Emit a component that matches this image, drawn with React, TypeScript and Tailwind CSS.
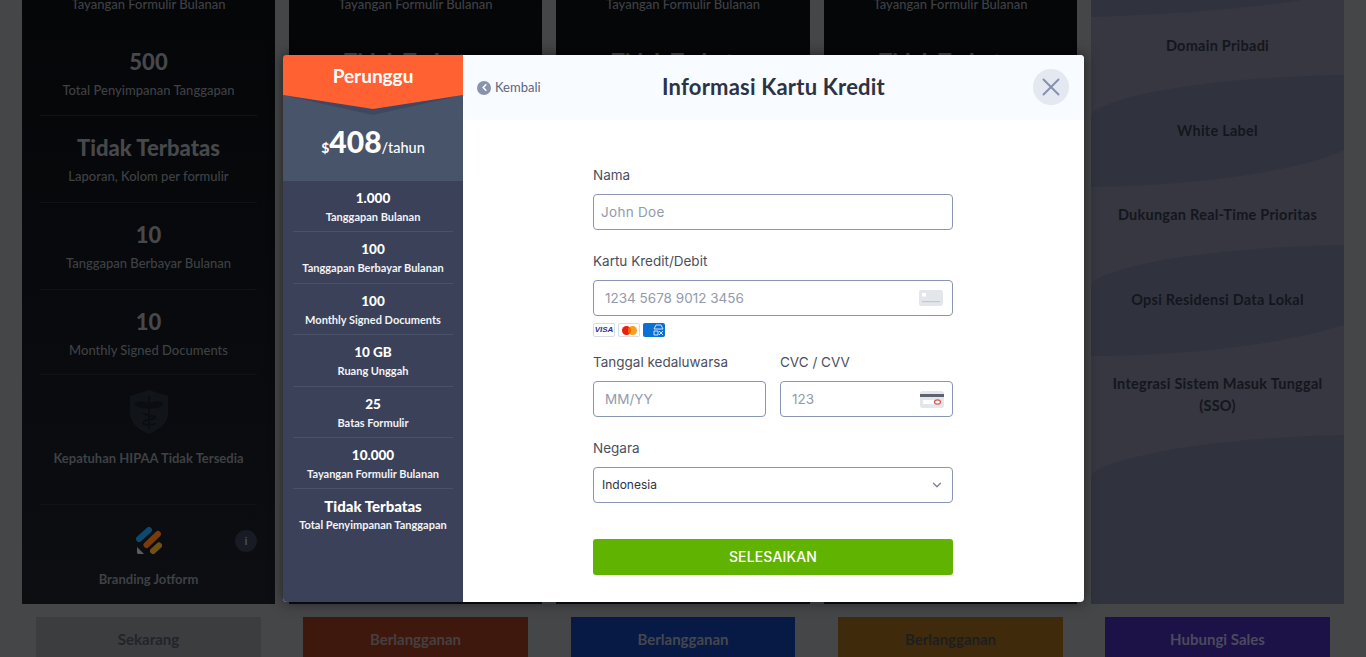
import { ChevronDown, ChevronLeft, X } from "lucide-react";

const HEAD = "font-['Lato','Liberation_Sans',sans-serif]";
const FORM = "font-['Inter','Liberation_Sans',sans-serif]";

const PLAN_ROWS = [
  { value: "1.000", label: "Tanggapan Bulanan" },
  { value: "100", label: "Tanggapan Berbayar Bulanan" },
  { value: "100", label: "Monthly Signed Documents" },
  { value: "10 GB", label: "Ruang Unggah" },
  { value: "25", label: "Batas Formulir" },
  { value: "10.000", label: "Tayangan Formulir Bulanan" },
];

function ShieldIcon() {
  return (
    <svg width="42" height="46" viewBox="0 0 42 46" fill="none">
      <path d="M21 1 L40 7 V24 C40 35 30 41 21 45 C12 41 2 35 2 24 V7 Z" fill="#11151a" />
      <path d="M6 15 C12 11 17 12 21 15 C25 12 30 11 36 15 C31 20 25 20 21 19 C17 20 11 20 6 15 Z" fill="#0b0d11" />
      <path d="M21 7 V40 M15 24 C20 28 26 26 27 28 C28 31 15 30 15 34 C15 37 27 36 27 34" stroke="#0b0d11" strokeWidth="2" />
    </svg>
  );
}

function JotformLogo() {
  return (
    <svg width="26" height="28" viewBox="0 0 26 28" fill="none">
      <path d="M3 12 L13 3" stroke="#0d4a72" strokeWidth="6" strokeLinecap="round" />
      <path d="M10.5 18 L22 7" stroke="#7a3a0a" strokeWidth="6" strokeLinecap="round" />
      <path d="M17 24 L23 18.5" stroke="#6d5214" strokeWidth="6" strokeLinecap="round" />
      <path d="M1 20 L8 27 H2.5 C1.6 27 1 26.4 1 25.5 Z" fill="#5c5c5c" />
    </svg>
  );
}

function FeatureColumn({ width, full }: { width: string; full?: boolean }) {
  const rowClass = "flex flex-col items-center pt-[18px] border-b border-[#101217] mx-[18px]";
  const valueClass = `${HEAD} text-[22px] leading-[28px] font-black text-[#46484b]`;
  const subClass = `${HEAD} text-[13px] leading-5 mt-1 font-medium text-[#3f4145]`;
  return (
    <div className={`${width} h-[604px] shrink-0 overflow-hidden bg-gradient-to-b from-[#050608] to-[#0c0e12] relative`}>
      <div className={`${HEAD} h-[30px] flex items-end justify-center pb-4 text-[13px] leading-5 font-medium text-[#3f4145]`}>
        Tayangan Formulir Bulanan
      </div>
      <div className={`${rowClass} h-[86px]`}>
        <div className={valueClass}>{full ? "500" : "Tidak Terbatas"}</div>
        <div className={subClass}>Total Penyimpanan Tanggapan</div>
      </div>
      <div className={`${rowClass} h-[87px]`}>
        <div className={valueClass}>Tidak Terbatas</div>
        <div className={subClass}>Laporan, Kolom per formulir</div>
      </div>
      <div className={`${rowClass} h-[87px]`}>
        <div className={valueClass}>10</div>
        <div className={subClass}>Tanggapan Berbayar Bulanan</div>
      </div>
      <div className={`${rowClass} h-[85px]`}>
        <div className={valueClass}>10</div>
        <div className={subClass}>Monthly Signed Documents</div>
      </div>
      <div className={`${rowClass} h-[130px] !pt-[14px]`}>
        <ShieldIcon />
        <div className={`${subClass} !mt-[13px] !font-bold`}>Kepatuhan HIPAA Tidak Tersedia</div>
      </div>
      <div className="flex flex-col items-center pt-[22px] relative">
        <JotformLogo />
        <div className={`${HEAD} text-[13px] leading-5 mt-[14px] font-bold text-[#3f4145]`}>Branding Jotform</div>
        <span className="absolute right-[18px] top-[25px] w-[22px] h-[22px] rounded-full bg-[#181b24] flex items-center justify-center text-[11px] font-bold text-[#4a4c52] font-['Liberation_Sans',sans-serif]">
          i
        </span>
      </div>
    </div>
  );
}

function EnterpriseColumn() {
  const rows = ["Domain Pribadi", "White Label", "Dukungan Real-Time Prioritas", "Opsi Residensi Data Lokal"];
  return (
    <div className="w-[253px] h-[604px] shrink-0 overflow-hidden bg-[#363741] relative pt-[3.5px]">
      <svg className="absolute inset-0" width="253" height="604" viewBox="0 0 253 604" fill="#30333e">
        <path d="M0 17 C60 15 150 10 210 0 H0 Z" />
        <path d="M0 187 C80 187 200 175 253 150 V75 C170 76 60 85 10 107 C3 110 0 114 0 120 Z" />
        <path d="M0 356 C90 356 190 345 253 325 V245 C170 246 60 255 10 277 C3 280 0 284 0 290 Z" />
        <path d="M0 604 H253 V435 C170 436 60 447 10 468 C3 471 0 475 0 480 Z" />
      </svg>
      {rows.map((text) => (
        <div key={text} className={`${HEAD} relative h-[84.7px] flex items-center justify-center text-[14.5px] tracking-[0.25px] font-bold text-[#14161d]`}>
          {text}
        </div>
      ))}
      <div className={`${HEAD} relative pt-[30.5px] px-4 text-center text-[14.5px] tracking-[0.25px] leading-[22px] font-bold text-[#14161d]`}>
        Integrasi Sistem Masuk Tunggal (SSO)
      </div>
    </div>
  );
}

function ActionButton({ label, className }: { label: string; className: string }) {
  return (
    <div className={`${HEAD} h-[44px] flex items-center justify-center text-[15px] font-bold ${className}`}>{label}</div>
  );
}

function CardLogos() {
  return (
    <div className="flex gap-[3px] mt-[7px] h-[14px]">
      <span className="w-[22px] h-[14px] rounded-[2px] border border-[#d8dce6] bg-white flex items-center justify-center text-[8px] font-bold italic leading-none text-[#26339a] font-['Liberation_Sans',sans-serif]">
        VISA
      </span>
      <span className="w-[22px] h-[14px] rounded-[2px] border border-[#d8dce6] bg-white flex items-center justify-center">
        <svg width="15" height="9" viewBox="0 0 15 9">
          <circle cx="4.5" cy="4.5" r="4.5" fill="#e8200f" />
          <circle cx="10.5" cy="4.5" r="4.5" fill="#f79e1b" />
          <path d="M7.5 1.1 A4.5 4.5 0 0 1 7.5 7.9 A4.5 4.5 0 0 1 7.5 1.1 Z" fill="#ff5f00" />
        </svg>
      </span>
      <span className="w-[22px] h-[14px] rounded-[2px] bg-[#0b6fd3] flex items-center justify-end pr-[1px]">
        <svg width="11" height="12" viewBox="0 0 11 12" fill="none" stroke="#cfe4f8" strokeWidth="1">
          <path d="M3 1 H8 L10 5 H1 Z M1 7 H5 V11 H1 Z M6 7 L10 11 M10 7 L6 11" />
        </svg>
      </span>
    </div>
  );
}

function CardIcon() {
  return (
    <svg width="24" height="16" viewBox="0 0 24 16">
      <rect width="24" height="16" rx="2.5" fill="#e3e7ec" />
      <rect x="3" y="3" width="4" height="3.5" fill="#ffffff" />
      <rect x="3" y="11" width="18" height="1.2" fill="#c2c8d0" />
    </svg>
  );
}

function CvcIcon() {
  return (
    <svg width="24" height="17" viewBox="0 0 24 17">
      <rect width="24" height="17" rx="2.5" fill="#e3e7ec" />
      <rect y="3" width="24" height="3" fill="#5d6470" />
      <rect x="3" y="9" width="18" height="4" fill="#ffffff" />
      <ellipse cx="17.5" cy="11" rx="3" ry="2.2" fill="#ffffff" stroke="#d9534f" strokeWidth="1.2" />
    </svg>
  );
}

function PlanPanel() {
  return (
    <div className="w-[180px] shrink-0 bg-[#3a4159] flex flex-col">
      <div className="relative h-[126px] bg-[#485469]">
        <svg className="absolute top-0 left-0" width="180" height="62" viewBox="0 0 180 62">
          <path d="M0 40 L90 60 L180 40 V0 H0 Z" fill="#3e4860" />
          <path d="M0 0 H180 V40 L90 54 L0 40 Z" fill="#ff6133" />
        </svg>
        <div className={`${HEAD} relative text-center text-[19px] leading-6 font-bold text-white pt-[9px]`}>Perunggu</div>
        <div className={`${HEAD} relative flex items-baseline justify-center mt-[35px] text-white`}>
          <span className="text-[14px] font-bold">$</span>
          <span className="text-[30px] leading-9 font-black">408</span>
          <span className="text-[14.5px] font-medium">/tahun</span>
        </div>
      </div>
      <div className="px-[10px]">
        {PLAN_ROWS.map((row) => (
          <div key={row.label} className="h-[51.4px] border-b border-[#4a5269] flex flex-col items-center pt-[9px]">
            <div className={`${HEAD} text-[13.5px] leading-[17px] font-black text-white`}>{row.value}</div>
            <div className={`${HEAD} text-[11px] leading-[14px] mt-[3px] font-bold text-[#f2f3f6] whitespace-nowrap`}>{row.label}</div>
          </div>
        ))}
        <div className="flex flex-col items-center pt-[9px]">
          <div className={`${HEAD} text-[15px] leading-[17px] font-black text-white`}>Tidak Terbatas</div>
          <div className={`${HEAD} text-[11px] leading-[14px] mt-[3px] font-bold text-[#f2f3f6] whitespace-nowrap`}>Total Penyimpanan Tanggapan</div>
        </div>
      </div>
    </div>
  );
}

function CardForm() {
  const labelClass = "block text-[13.5px] leading-5 text-[#4a4f5e] mb-[9px]";
  const inputClass =
    "w-full h-[36px] rounded-[4px] border border-[#8a95b3] bg-white text-[13.5px] outline-none placeholder:text-[#929aab]";
  return (
    <form className={`${FORM} w-[360px] ml-[130px] pt-[45px]`}>
      <label className={labelClass}>Nama</label>
      <input className={`${inputClass} pl-[7px] tracking-[0.3px]`} placeholder="John Doe" />

      <label className={`${labelClass} mt-[21px]`}>Kartu Kredit/Debit</label>
      <div className="relative">
        <input className={`${inputClass} pl-[11px]`} placeholder="1234 5678 9012 3456" />
        <span className="absolute right-[10px] top-[10px] flex">
          <CardIcon />
        </span>
      </div>
      <CardLogos />

      <div className="flex gap-[14px] mt-[15px]">
        <div className="flex-1">
          <label className={labelClass}>Tanggal kedaluwarsa</label>
          <input className={`${inputClass} pl-[11px]`} placeholder="MM/YY" />
        </div>
        <div className="flex-1">
          <label className={labelClass}>CVC / CVV</label>
          <div className="relative">
            <input className={`${inputClass} pl-[11px]`} placeholder="123" />
            <span className="absolute right-[9px] top-[10px] flex">
              <CvcIcon />
            </span>
          </div>
        </div>
      </div>

      <label className={`${labelClass} mt-[21px]`}>Negara</label>
      <div className="relative">
        <select className="w-full h-[36px] rounded-[4px] border border-[#8a95b3] bg-white pl-[8px] text-[12px] text-[#2c3345] outline-none appearance-none">
          <option>Indonesia</option>
        </select>
        <ChevronDown className="absolute right-[9px] top-[11px] w-[14px] h-[14px] text-[#7b8296]" strokeWidth={2.25} />
      </div>

      <button type="button" className="w-full h-[36px] mt-[36px] pb-[1px] rounded-[3px] bg-[#60b300] text-white text-[14px] font-medium tracking-[0.15px]">
        SELESAIKAN
      </button>
    </form>
  );
}

export default function App() {
  return (
    <div className="relative w-[1366px] h-[657px] overflow-hidden bg-[#454647]">
      <div className="flex gap-[14px] pl-[22px]">
        <FeatureColumn width="w-[253px]" full />
        <FeatureColumn width="w-[253px]" />
        <FeatureColumn width="w-[254px]" />
        <FeatureColumn width="w-[253px]" />
        <EnterpriseColumn />
      </div>
      <div className="flex gap-[14px] pl-[22px] mt-[13px]">
        <div className="w-[253px] px-[14px]">
          <ActionButton label="Sekarang" className="bg-[#3c3d3f] text-[#22242c]" />
        </div>
        <div className="w-[253px] px-[14px]">
          <ActionButton label="Berlangganan" className="bg-[#3f180d] text-[#454040]" />
        </div>
        <div className="w-[254px] px-[15px]">
          <ActionButton label="Berlangganan" className="bg-[#071a45] text-[#45474f]" />
        </div>
        <div className="w-[253px] px-[14px]">
          <ActionButton label="Berlangganan" className="bg-[#3f2b0b] text-[#1e1e20]" />
        </div>
        <div className="w-[253px] px-[14px]">
          <ActionButton label="Hubungi Sales" className="bg-[#1c1247] text-[#4c4a5c]" />
        </div>
      </div>

      {/* modal */}
      <div className="absolute left-[283px] top-[55px] w-[801px] h-[547px] flex rounded-[4px] overflow-hidden bg-white shadow-[0_0_14px_rgba(0,0,0,0.55)]">
        <PlanPanel />
        <div className="flex-1 flex flex-col">
          <div className="h-[65px] shrink-0 bg-[#f8fbff] grid grid-cols-[1fr_auto_1fr] items-center">
            <div className={`${HEAD} flex items-center gap-[4px] pl-[14px] text-[13px] text-[#5d6480]`}>
              <span className="w-[14px] h-[14px] rounded-full bg-[#8a93ad] flex items-center justify-center">
                <ChevronLeft className="w-[11px] h-[11px] text-white" strokeWidth={3.5} />
              </span>
              Kembali
            </div>
            <div className={`${HEAD} text-[22px] font-bold tracking-[0.2px] text-[#2c3345] pb-[2px]`}>Informasi Kartu Kredit</div>
            <div className="flex justify-end pr-[15px] pb-[1px]">
              <span className="w-[36px] h-[36px] rounded-full bg-[#e3e8f1] flex items-center justify-center">
                <X className="w-[30px] h-[30px] text-[#8791ad]" strokeWidth={1.5} />
              </span>
            </div>
          </div>
          <CardForm />
        </div>
      </div>
    </div>
  );
}
